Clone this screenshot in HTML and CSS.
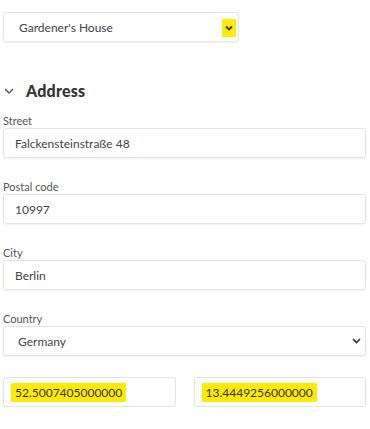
FILE: index.html
```html
<!DOCTYPE html>
<html>
<head>
    <title>Location</title>
    <link rel="stylesheet" href="styles.css">
</head>
<body>
    <div class="location-picker">
        <span class="picker-value">Gardener's House</span>
        <span class="picker-toggle">
            <svg width="8" height="6" viewBox="0 0 8 6"><path d="M1 1.5 L4 4.5 L7 1.5" fill="none" stroke="#333" stroke-width="1.8"/></svg>
        </span>
    </div>

    <h2 class="section-title">
        <svg class="section-chevron" width="10" height="6" viewBox="0 0 10 6"><path d="M1 1 L5 5 L9 1" fill="none" stroke="#555" stroke-width="1.4"/></svg>
        Address
    </h2>

    <div class="form-field">
        <label>Street</label>
        <div class="input">Falckensteinstraße 48</div>
    </div>
    <div class="form-field">
        <label>Postal code</label>
        <div class="input">10997</div>
    </div>
    <div class="form-field">
        <label>City</label>
        <div class="input">Berlin</div>
    </div>
    <div class="form-field">
        <label>Country</label>
        <div class="input select">
            <span>Germany</span>
            <svg width="9" height="6" viewBox="0 0 9 6"><path d="M1 1 L4.5 4.5 L8 1" fill="none" stroke="#333" stroke-width="1.6"/></svg>
        </div>
    </div>

    <div class="coords">
        <div class="input"><span class="marker">52.5007405000000</span></div>
        <div class="input"><span class="marker">13.4449256000000</span></div>
    </div>
</body>
</html>
```

FILE: styles.css
```css
body {
    margin: 0;
    padding: 12px 4px 0 3px;
    background: #fff;
    font-family: Lato, "Open Sans", sans-serif;
    color: #3a3a3a;
}
.location-picker {
    width: 236px;
    height: 30px;
    box-sizing: border-box;
    display: flex;
    align-items: center;
    justify-content: space-between;
    padding: 0 2px 0 15px;
    border: 1px solid #e6e6e6;
    border-radius: 3px;
    box-shadow: 0 1px 2px rgba(0,0,0,0.06);
    font-size: 12px;
    color: #444;
}
.picker-toggle {
    width: 14px;
    height: 18px;
    margin-top: 2px;
    background: #ffec00;
    display: flex;
    align-items: center;
    justify-content: center;
}
.section-title {
    margin: 39px 0 13px;
    display: flex;
    align-items: center;
    gap: 12px;
    font-size: 16px;
    line-height: 20px;
    font-weight: 900;
    color: #333;
    letter-spacing: 0.2px;
}
.section-chevron {
    margin-left: 1px;
}
.form-field {
    margin-bottom: 22px;
}
.form-field label {
    display: block;
    font-size: 11px;
    line-height: 14px;
    color: #555;
}
.input {
    height: 30px;
    box-sizing: border-box;
    display: flex;
    align-items: center;
    padding: 0 11px;
    border: 1px solid #e3e3e3;
    border-radius: 3px;
    box-shadow: 0 1px 2px rgba(0,0,0,0.06);
    font-size: 12px;
    color: #444;
}
.select {
    justify-content: space-between;
    padding: 0 4px 0 14px;
}
.coords {
    margin-top: -1px;
    display: grid;
    grid-template-columns: 1fr 1fr;
    gap: 18px;
}
.coords .input {
    padding: 0 7px;
}
.marker {
    background: #ffea00;
    padding: 2px 4px;
    font-size: 12px;
    color: #333;
}
```
